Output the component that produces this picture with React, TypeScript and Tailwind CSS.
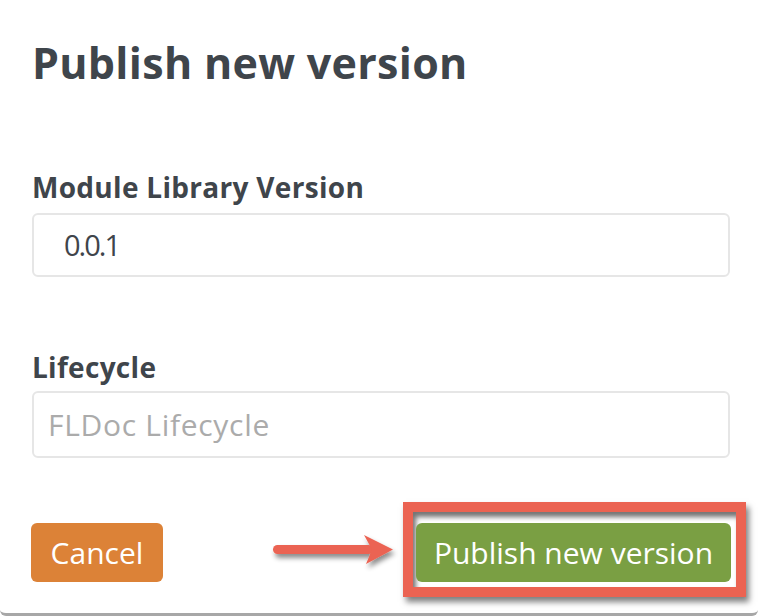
import React from "react";

function Arrow() {
  return (
    <svg width="128" height="40" viewBox="0 0 128 40" className="shrink-0" style={{ overflow: "visible" }}>
      <defs>
        <filter id="arrowShadow" x="-20%" y="-50%" width="140%" height="200%">
          <feDropShadow dx="2" dy="4" stdDeviation="2.5" floodColor="#000" floodOpacity="0.45" />
        </filter>
      </defs>
      <g filter="url(#arrowShadow)" fill="#eb6352">
        <rect x="0" y="15" width="100" height="9" rx="4.5" />
        <path d="M91 5 L120 19.5 L93 34 L99 19.5 Z" />
      </g>
    </svg>
  );
}

export default function App() {
  return (
    <div
      className="w-[758px] h-[616px] bg-white border-b-[3px] border-[#a7a7a7] rounded-b-md overflow-hidden flex flex-col px-8"
      style={{ fontFamily: '"Open Sans", "Liberation Sans", sans-serif' }}
    >
      {/* タイトル */}
      <h1 className="mt-[35px] text-[43px] leading-[56px] font-bold text-[#3f454b] tracking-[0.3px]">
        Publish new version
      </h1>

      {/* バージョン */}
      <label className="mt-[80px] text-[28px] leading-[32px] font-bold text-[#3f454b] tracking-[0.3px]">
        Module Library Version
      </label>
      <div className="mt-[10px] h-[64px] w-[698px] shrink-0 rounded-md border-2 border-[#e6e6e6] flex items-center pl-[30px] text-[29px] tracking-[-2px] text-[#3f454b]">
        0.0.1
      </div>

      {/* ライフサイクル */}
      <label className="mt-[74px] text-[28px] leading-[32px] font-bold text-[#3f454b] tracking-[0.3px]">
        Lifecycle
      </label>
      <div className="mt-[8px] h-[67px] w-[698px] shrink-0 rounded-md border-2 border-[#e6e6e6] flex items-center pl-[14px] text-[30px] tracking-[0.7px] text-[#ababab]">
        FLDoc Lifecycle
      </div>

      {/* ボタン */}
      <div className="mt-[44px] flex items-start">
        <button className="mt-[21px] ml-[-1px] shrink-0 h-[59px] w-[132px] rounded-md bg-[#dc8237] text-white text-[30px] flex items-center justify-center">
          Cancel
        </button>
        <div className="mt-[28px] ml-[110px] mr-[2px] shrink-0">
          <Arrow />
        </div>
        <div className="shrink-0 border-[10px] border-[#eb6352] pt-[11px] pb-[5px] pl-[3px] pr-[5px] shadow-[3px_5px_6px_rgba(0,0,0,0.5),inset_3px_5px_5px_rgba(0,0,0,0.55)]">
          <button className="h-[59px] w-[315px] rounded-md bg-[#7a9f43] text-white text-[30px] flex items-center justify-center">
            Publish new version
          </button>
        </div>
      </div>
    </div>
  );
}
